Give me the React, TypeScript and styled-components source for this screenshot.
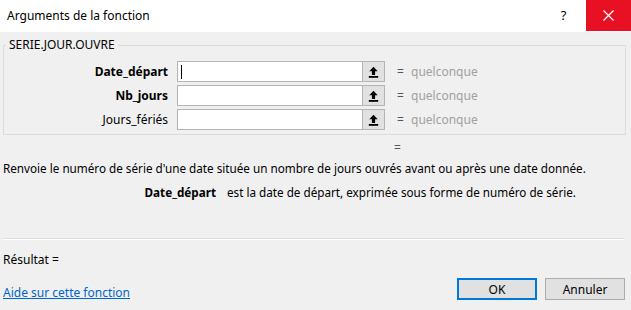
import React from 'react';
import styled, { createGlobalStyle } from 'styled-components';

const GlobalStyle = createGlobalStyle`
  html, body {
    margin: 0;
    padding: 0;
    background: #f0f0f0;
  }
  body {
    font-family: 'Noto Sans', 'Liberation Sans', sans-serif;
    font-size: 12px;
    color: #000;
  }
`;

type Arg = { name: string; bold: boolean; focused?: boolean };

const args: Arg[] = [
  { name: 'Date_départ', bold: true, focused: true },
  { name: 'Nb_jours', bold: true },
  { name: 'Jours_fériés', bold: false }
];

const RefIcon: React.FC = () => (
  <svg width="11" height="12" viewBox="0 0 11 12">
    <path d="M5.5 0.8 L1.3 5.2 L3.9 5.2 L3.9 9 L7.1 9 L7.1 5.2 L9.7 5.2 Z" fill="#000" />
    <rect x="0.8" y="10" width="9.4" height="1.8" fill="#000" />
  </svg>
);

const App: React.FC = () => {
  return <>
    <GlobalStyle />
    <Dialog>
      <TitleBar>
        <Title>Arguments de la fonction</Title>
        <HelpButton>?</HelpButton>
        <CloseButton>
          <svg width="11" height="11" viewBox="0 0 11 11">
            <path d="M0.5 0.5 L10.5 10.5 M10.5 0.5 L0.5 10.5" stroke="#fff" strokeWidth="1.2" />
          </svg>
        </CloseButton>
      </TitleBar>
      <Body>
        <GroupBox>
          <Legend>SERIE.JOUR.OUVRE</Legend>
          {args.map(a => (
            <ArgRow key={a.name}>
              <ArgLabel $bold={a.bold}>{a.name}</ArgLabel>
              <InputBox>
                {a.focused ? <Caret /> : null}
              </InputBox>
              <RefButton><RefIcon /></RefButton>
              <Equals>=</Equals>
              <Value>quelconque</Value>
            </ArgRow>
          ))}
        </GroupBox>
        <ResultEquals>=</ResultEquals>
        <Description>Renvoie le numéro de série d'une date située un nombre de jours ouvrés avant ou après une date donnée.</Description>
        <ParamHelp>
          <ParamName>Date_départ</ParamName>
          <ParamText>est la date de départ, exprimée sous forme de numéro de série.</ParamText>
        </ParamHelp>
        <Spacer />
        <Separator />
        <Result>Résultat =</Result>
        <Footer>
          <HelpLink href="#">Aide sur cette fonction</HelpLink>
          <Buttons>
            <DialogButton $primary>OK</DialogButton>
            <DialogButton>Annuler</DialogButton>
          </Buttons>
        </Footer>
      </Body>
    </Dialog>
  </>;
};

export default App;

const Dialog = styled.div`
  width: 631px;
  height: 310px;
  display: flex;
  flex-direction: column;
  background: #f0f0f0;
  overflow: hidden;
`;

const TitleBar = styled.div`
  height: 32px;
  flex-shrink: 0;
  background: #fff;
  display: flex;
  align-items: center;
`;

const Title = styled.span`
  flex: 1;
  padding-left: 7px;
  font-size: 12px;
  padding-bottom: 2px;
`;

const HelpButton = styled.span`
  width: 45px;
  text-align: center;
  font-size: 13px;
  padding-bottom: 2px;
`;

const CloseButton = styled.div`
  width: 45px;
  height: 31px;
  align-self: flex-start;
  background: #e81123;
  display: flex;
  align-items: center;
  justify-content: center;
`;

const Body = styled.div`
  flex: 1;
  display: flex;
  flex-direction: column;
  padding: 0 5px 0 3px;
`;

const GroupBox = styled.fieldset`
  margin: 5px 0 0 0;
  padding: 8px 0 4px 0;
  border: 1px solid #dcdcdc;
  display: flex;
  flex-direction: column;
  gap: 3px;
`;

const Legend = styled.legend`
  padding: 0 3px;
  margin-left: 2px;
  line-height: 16px;
`;

const ArgRow = styled.div`
  display: flex;
  align-items: center;
  height: 21px;
`;

const ArgLabel = styled.span<{ $bold: boolean }>`
  width: 164px;
  text-align: right;
  font-weight: ${p => (p.$bold ? 700 : 400)};
  margin-right: 9px;
`;

const InputBox = styled.div`
  width: 181px;
  height: 19px;
  background: #fff;
  border: 1px solid #b4b4b4;
  border-right: none;
  display: flex;
  align-items: center;
  padding-left: 3px;
  box-sizing: content-box;
`;

const Caret = styled.span`
  width: 1px;
  height: 14px;
  background: #000;
`;

const RefButton = styled.div`
  width: 21px;
  height: 19px;
  background: #e1e1e1;
  border: 1px solid #b4b4b4;
  display: flex;
  align-items: center;
  justify-content: center;
`;

const Equals = styled.span`
  margin-left: 12px;
  width: 14px;
  color: #555;
`;

const Value = styled.span`
  color: #a0a0a0;
`;

const ResultEquals = styled.div`
  padding-left: 391px;
  margin-top: 5px;
  line-height: 16px;
  color: #555;
`;

const Description = styled.div`
  margin-top: 4px;
  line-height: 16px;
  font-size: 11.7px;
`;

const ParamHelp = styled.div`
  display: flex;
  margin-top: 8px;
  line-height: 16px;
  font-size: 11.7px;
`;

const ParamName = styled.span`
  width: 213px;
  text-align: right;
  font-weight: 700;
  margin-right: 11px;
`;

const ParamText = styled.span``;

const Spacer = styled.div`
  flex: 1;
`;

const Separator = styled.div`
  height: 0;
  border-top: 1px solid #dcdcdc;
  border-bottom: 1px solid #fff;
  margin-right: 2px;
`;

const Result = styled.div`
  margin-top: 12px;
  line-height: 16px;
`;

const Footer = styled.div`
  display: flex;
  align-items: center;
  justify-content: space-between;
  height: 22px;
  margin-top: 10px;
  margin-bottom: 10px;
`;

const HelpLink = styled.a`
  color: #0066cc;
  text-decoration: underline;
  margin-top: 6px;
`;

const Buttons = styled.div`
  display: flex;
  gap: 8px;
  margin-right: 1px;
`;

const DialogButton = styled.button<{ $primary?: boolean }>`
  width: 80px;
  height: 22px;
  font-family: inherit;
  font-size: 12px;
  background: #e1e1e1;
  border: ${p => (p.$primary ? '2px solid #0078d7' : '1px solid #adadad')};
  padding: 0;
  color: #000;
`;
